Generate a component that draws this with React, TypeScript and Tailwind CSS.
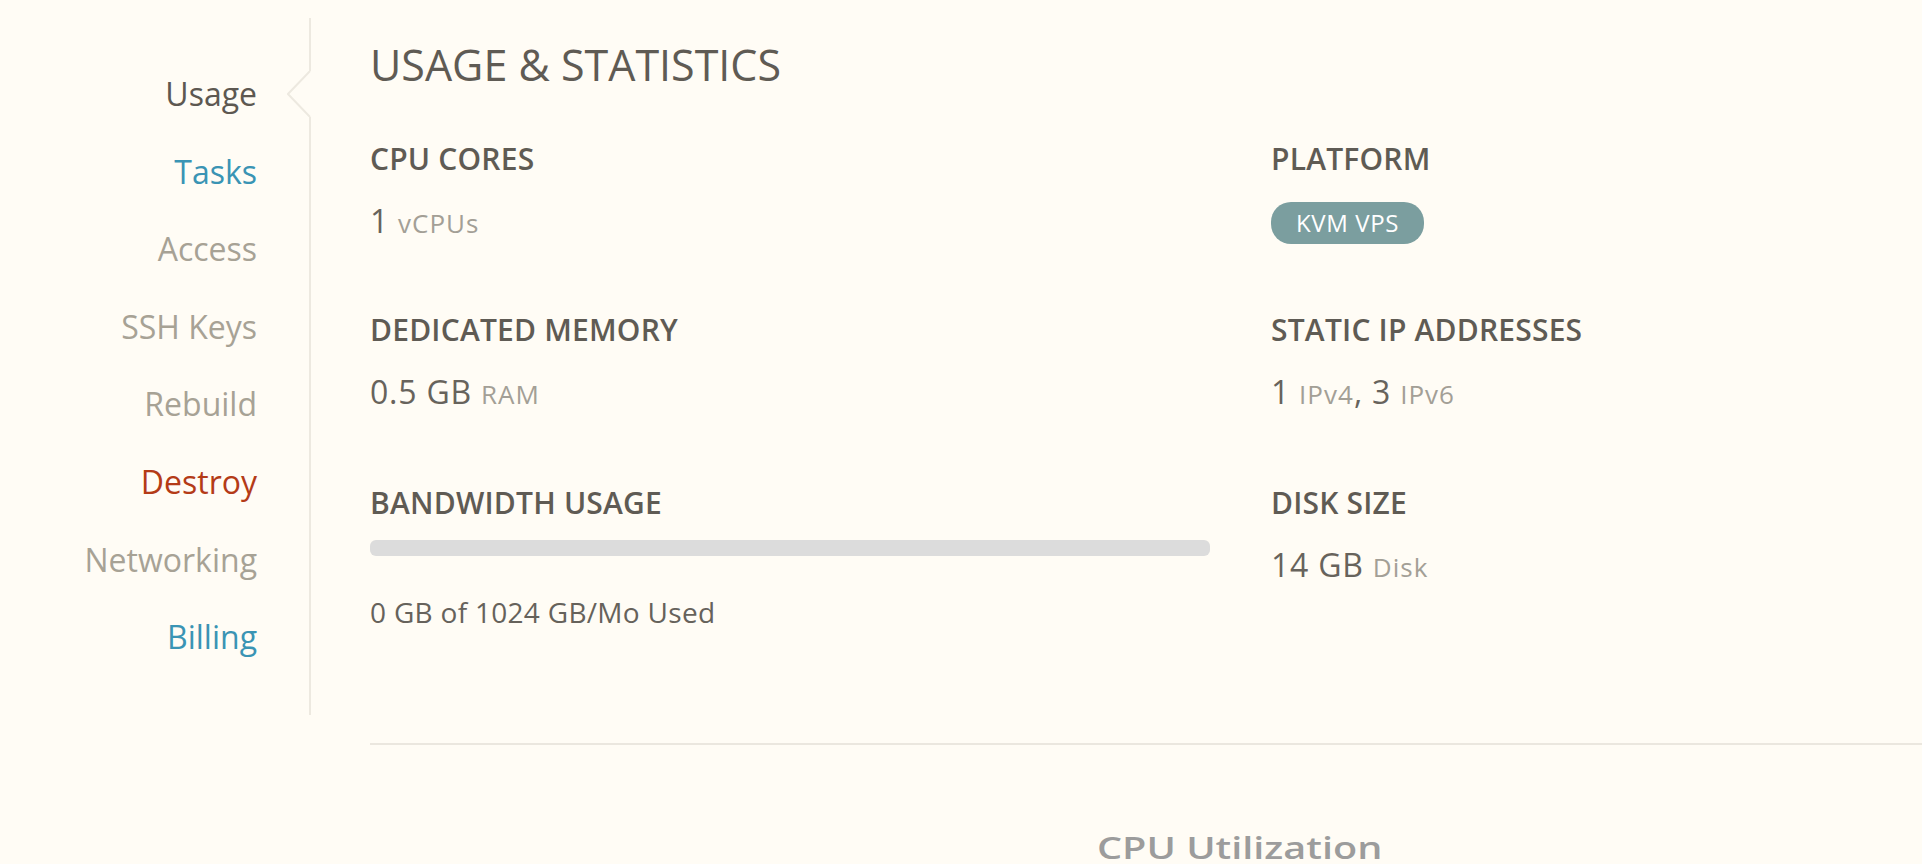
const navItems = [
  { label: "Usage", color: "text-[#5d5851]" },
  { label: "Tasks", color: "text-[#3a94b4]" },
  { label: "Access", color: "text-[#a7a295]" },
  { label: "SSH Keys", color: "text-[#a7a295]" },
  { label: "Rebuild", color: "text-[#a7a295]" },
  { label: "Destroy", color: "text-[#b43b17]" },
  { label: "Networking", color: "text-[#a7a295]" },
  { label: "Billing", color: "text-[#3a94b4]" },
];

const Label = ({ children }: { children: React.ReactNode }) => (
  <h3 className="h-[36px] leading-[36px] text-[30px] font-semibold text-[#5f5b54] tracking-[0.2px]">
    {children}
  </h3>
);

const Num = ({ children }: { children: React.ReactNode }) => (
  <span className="text-[32px] tracking-[0.8px] text-[#67635c]">{children}</span>
);

const Unit = ({ children }: { children: React.ReactNode }) => (
  <span className="ml-[9px] text-[26px] tracking-[1px] text-[#a39f96]">{children}</span>
);

const Value = ({ children }: { children: React.ReactNode }) => (
  <div className="mt-[23px] h-[42px] leading-[42px]">{children}</div>
);

export default function App() {
  return (
    <div className="min-h-screen bg-[#fffcf5] pt-[18px] font-['Open_Sans',sans-serif]">
      <div className="flex">
        <aside className="relative h-[697px] w-[311px] shrink-0 border-r-2 border-[#ede9e0] pr-[52px] pt-[37px]">
          <nav>
            {navItems.map((item) => (
              <a
                key={item.label}
                className={`block h-[77.6px] text-right text-[32px] leading-[77.6px] ${item.color}`}
              >
                {item.label}
              </a>
            ))}
          </nav>
          {/* notch pointing at active item */}
          <svg width="24" height="46" className="absolute right-[-2px] top-[53px]">
            <rect x="20" y="0" width="4" height="46" fill="#fffcf5" />
            <polyline points="23,0 1,23 23,46" fill="none" stroke="#ede9e0" strokeWidth="2" />
          </svg>
        </aside>

        <main className="flex-1 pl-[59px]">
          <h1 className="mt-[25px] text-[43px] font-normal leading-[44px] text-[#5f5b54]">
            USAGE &amp; STATISTICS
          </h1>

          <div className="mt-[54px] grid grid-cols-[901px_1fr]">
            <div>
              <Label>CPU CORES</Label>
              <Value>
                <Num>1</Num>
                <Unit>vCPUs</Unit>
              </Value>

              <div className="mt-[70px]">
                <Label>DEDICATED MEMORY</Label>
                <Value>
                  <Num>0.5 GB</Num>
                  <Unit>RAM</Unit>
                </Value>
              </div>

              <div className="mt-[72px]">
                <Label>BANDWIDTH USAGE</Label>
                <div className="mt-[19px] h-4 w-[840px] rounded-[6px] bg-[#dcdcdc]" />
                <p className="mt-[41px] text-[28px] leading-[30px] tracking-[0.3px] text-[#66625b]">
                  0 GB of 1024 GB/Mo Used
                </p>
              </div>
            </div>

            <div>
              <Label>PLATFORM</Label>
              <div className="mt-[25px] flex">
                <span className="flex h-[42px] w-[153px] items-center justify-center rounded-[20px] bg-[#7b9e9f] text-[24px] tracking-[0.6px] text-white">
                  KVM VPS
                </span>
              </div>

              <div className="mt-[68px]">
                <Label>STATIC IP ADDRESSES</Label>
                <Value>
                  <Num>1</Num>
                  <Unit>IPv4</Unit>
                  <Num>,</Num>
                  <Num> 3</Num>
                  <Unit>IPv6</Unit>
                </Value>
              </div>

              <div className="mt-[72px]">
                <Label>DISK SIZE</Label>
                <Value>
                  <Num>14 GB</Num>
                  <Unit>Disk</Unit>
                </Value>
              </div>
            </div>
          </div>

          <div className="mt-[116px] h-[2px] bg-[#ebe7df]" />

          <div className="mt-[83px] pl-[727px]">
            <h2 className="inline-block origin-left scale-x-[1.32] text-[30px] font-semibold leading-[40px] text-[#9c9c9c]">
              CPU Utilization
            </h2>
          </div>
        </main>
      </div>
    </div>
  );
}
